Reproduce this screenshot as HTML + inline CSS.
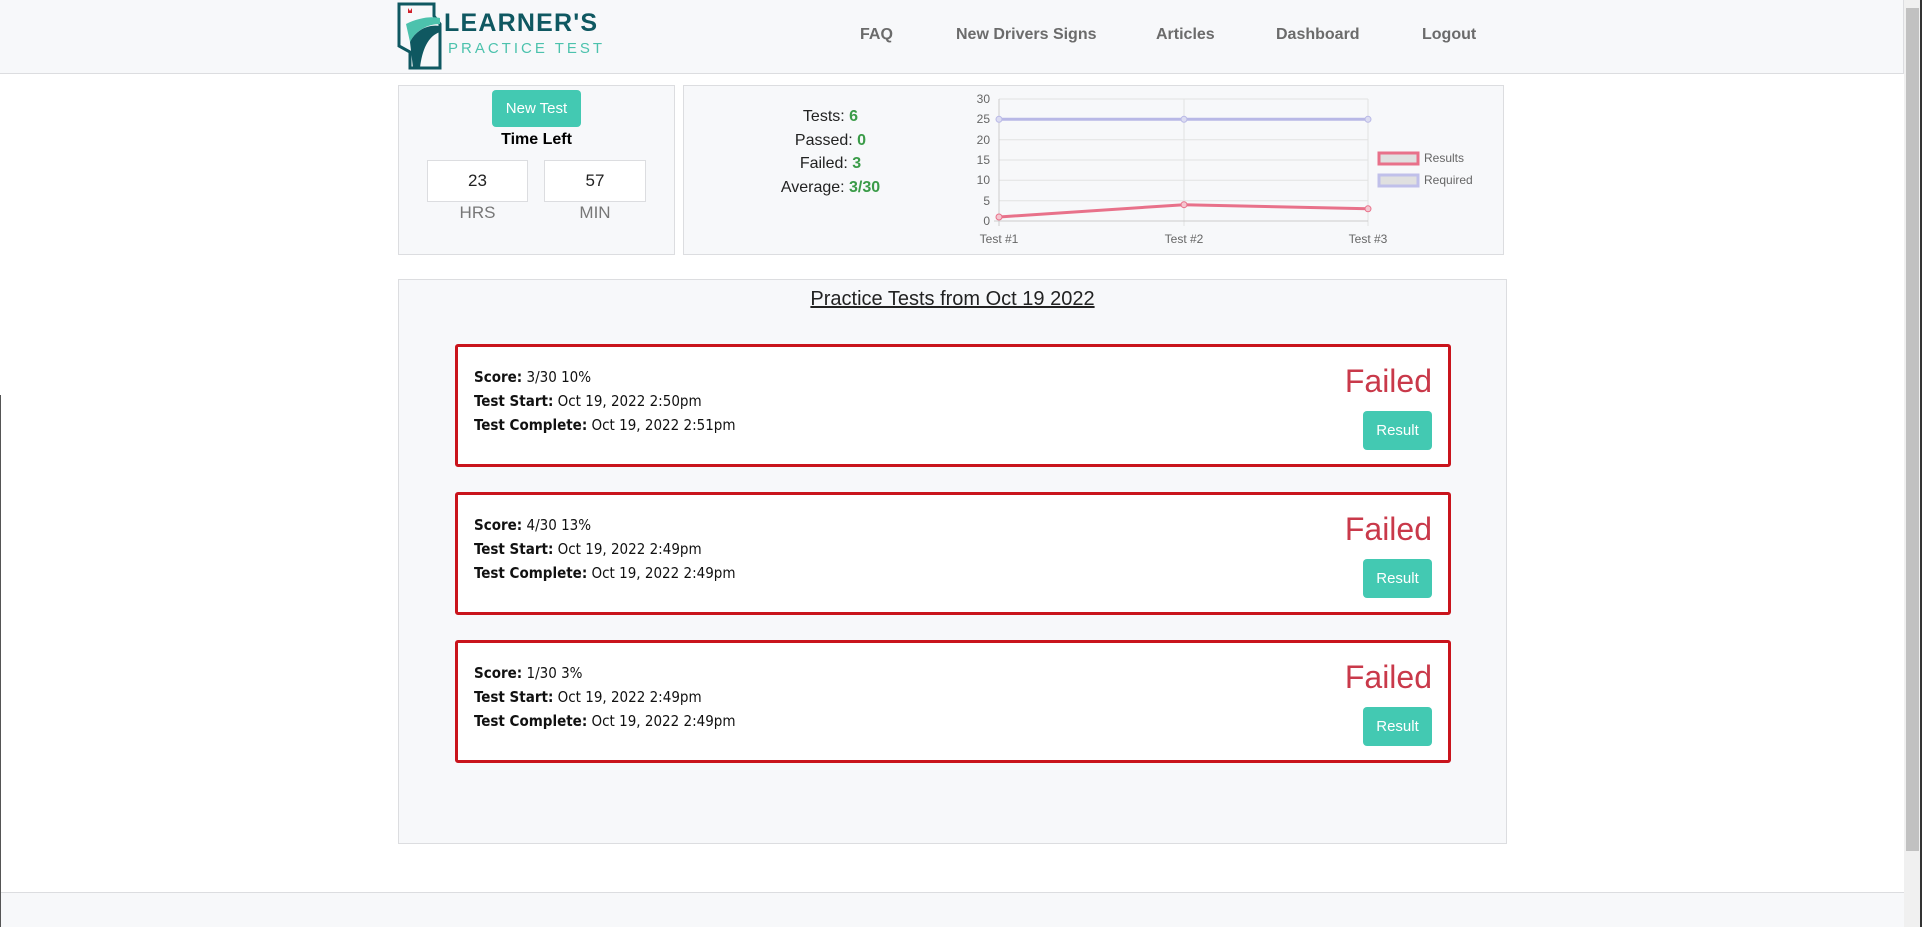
<!DOCTYPE html>
<html><head><meta charset="utf-8"><style>
*{margin:0;padding:0;box-sizing:border-box}
body{width:1922px;height:927px;overflow:hidden;background:#fff;font-family:"Liberation Sans",sans-serif;position:relative}
.a{position:absolute}
.hdr{left:0;top:0;width:1904px;height:74px;background:#f7f8fa;border-bottom:1px solid #dcdde0;border-right:1px solid #dcdde0}
.nav{top:26px;font-size:16px;font-weight:bold;color:#6b6b6b}
.panel{background:#f7f8fa;border:1px solid #dcdde0}
.btn{background:#43c9b2;color:#fff;border-radius:4px;text-align:center}
.box{background:#fff;border:1px solid #dcdde0;text-align:center;font-size:17px;line-height:40px;color:#222}
.st{left:683px;width:295px;text-align:center;font-size:16px;color:#222}
.st b{color:#3a9b48}
.card{left:455px;width:996px;height:123px;background:#fff;border:3px solid #c9141c;border-radius:3px}
.card .t{position:absolute;left:16px;font-size:15px;color:#111;font-family:"DejaVu Sans Condensed","Liberation Sans",sans-serif}
.card .f{position:absolute;right:16px;top:16px;font-size:32px;color:#c9394a}
.card .r{position:absolute;right:16px;top:64px;width:69px;height:39px;line-height:39px;font-size:15px}
</style></head><body>
<div class="a hdr"></div>
<svg class="a" style="left:396px;top:2px" width="48" height="68" viewBox="0 0 48 68">
<path d="M3 2 H38 V14 L44 22 V66 H14 L14 50 L3 44 Z" fill="none" stroke="#0f5861" stroke-width="3"/>
<path d="M10 22 C22 16 34 14 44 16 L44 22 C32 22 20 28 14 40 Z" fill="#4cc2ad"/>
<path d="M14 40 C20 28 32 22 44 24 L44 30 C32 34 26 48 24 66 H17 Z" fill="#0f5861"/>
<path d="M12 6 l2 3 2-3 v5 h-4z" fill="#d0202a"/>
</svg>
<div class="a" style="left:444px;top:9px;font-size:25px;font-weight:bold;color:#0f5861;letter-spacing:1.2px">LEARNER'S</div>
<div class="a" style="left:448px;top:40px;font-size:15px;color:#4cc2ad;letter-spacing:3px">PRACTICE TEST</div>
<div class="a nav" style="left:860px">FAQ</div>
<div class="a nav" style="left:956px">New Drivers Signs</div>
<div class="a nav" style="left:1156px">Articles</div>
<div class="a nav" style="left:1276px">Dashboard</div>
<div class="a nav" style="left:1422px">Logout</div>

<div class="a panel" style="left:398px;top:85px;width:277px;height:170px"></div>
<div class="a btn" style="left:492px;top:90px;width:89px;height:37px;line-height:37px;font-size:15px">New Test</div>
<div class="a" style="left:398px;top:131px;width:277px;text-align:center;font-size:16px;font-weight:bold">Time Left</div>
<div class="a box" style="left:427px;top:160px;width:101px;height:42px">23</div>
<div class="a box" style="left:544px;top:160px;width:102px;height:42px">57</div>
<div class="a" style="left:427px;top:203px;width:101px;text-align:center;font-size:17px;color:#777">HRS</div>
<div class="a" style="left:544px;top:203px;width:102px;text-align:center;font-size:17px;color:#777">MIN</div>

<div class="a panel" style="left:683px;top:85px;width:821px;height:170px"></div>
<div class="a st" style="top:108px">Tests: <b>6</b></div>
<div class="a st" style="top:132px">Passed: <b>0</b></div>
<div class="a st" style="top:155px">Failed: <b>3</b></div>
<div class="a st" style="top:179px">Average: <b>3/30</b></div>
<svg class="a" style="left:0;top:0" width="1922" height="260" font-family="Liberation Sans" font-size="12" fill="#666">
<g stroke="#e2e2e2" stroke-width="1">
<line x1="999" y1="99" x2="1368" y2="99"/><line x1="999" y1="119.3" x2="1368" y2="119.3"/><line x1="999" y1="139.7" x2="1368" y2="139.7"/><line x1="999" y1="160" x2="1368" y2="160"/><line x1="999" y1="180.3" x2="1368" y2="180.3"/><line x1="999" y1="200.7" x2="1368" y2="200.7"/>
<line x1="1184" y1="99" x2="1184" y2="226"/><line x1="1368" y1="99" x2="1368" y2="226"/>
</g>
<line x1="994" y1="221" x2="1368" y2="221" stroke="#ccc"/><line x1="999" y1="99" x2="999" y2="226" stroke="#ccc"/>
<g text-anchor="end"><text x="990" y="103">30</text><text x="990" y="123">25</text><text x="990" y="144">20</text><text x="990" y="164">15</text><text x="990" y="184">10</text><text x="990" y="205">5</text><text x="990" y="225">0</text></g>
<g text-anchor="middle"><text x="999" y="243">Test #1</text><text x="1184" y="243">Test #2</text><text x="1368" y="243">Test #3</text></g>
<polyline points="999,119.3 1184,119.3 1368,119.3" fill="none" stroke="#b8b8e6" stroke-width="3"/>
<g fill="#dcdcf2" stroke="#b8b8e6"><circle cx="999" cy="119.3" r="3"/><circle cx="1184" cy="119.3" r="3"/><circle cx="1368" cy="119.3" r="3"/></g>
<polyline points="999,217 1184,204.7 1368,208.8" fill="none" stroke="#e8718a" stroke-width="3"/>
<g fill="#f5c6d0" stroke="#e8718a"><circle cx="999" cy="217" r="3"/><circle cx="1184" cy="204.7" r="3"/><circle cx="1368" cy="208.8" r="3"/></g>
<rect x="1379" y="153" width="39" height="11" fill="#e0e0e0" stroke="#e8718a" stroke-width="3"/>
<rect x="1379" y="175" width="39" height="11" fill="#e0e0e0" stroke="#c0c0ea" stroke-width="3"/>
<text x="1424" y="162">Results</text><text x="1424" y="184">Required</text>
</svg>

<div class="a panel" style="left:398px;top:279px;width:1109px;height:565px"></div>
<div class="a" style="left:398px;top:288px;width:1109px;text-align:center;font-size:20px;color:#222;text-decoration:underline">Practice Tests from Oct 19 2022</div>

<div class="a card" style="top:344px">
<div class="t" style="top:21px"><b>Score:</b> 3/30 10%</div>
<div class="t" style="top:45px"><b>Test Start:</b> Oct 19, 2022 2:50pm</div>
<div class="t" style="top:69px"><b>Test Complete:</b> Oct 19, 2022 2:51pm</div>
<div class="f">Failed</div><div class="r btn">Result</div></div>
<div class="a card" style="top:492px">
<div class="t" style="top:21px"><b>Score:</b> 4/30 13%</div>
<div class="t" style="top:45px"><b>Test Start:</b> Oct 19, 2022 2:49pm</div>
<div class="t" style="top:69px"><b>Test Complete:</b> Oct 19, 2022 2:49pm</div>
<div class="f">Failed</div><div class="r btn">Result</div></div>
<div class="a card" style="top:640px">
<div class="t" style="top:21px"><b>Score:</b> 1/30 3%</div>
<div class="t" style="top:45px"><b>Test Start:</b> Oct 19, 2022 2:49pm</div>
<div class="t" style="top:69px"><b>Test Complete:</b> Oct 19, 2022 2:49pm</div>
<div class="f">Failed</div><div class="r btn">Result</div></div>

<div class="a" style="left:0;top:892px;width:1904px;height:35px;background:#f7f8fa;border-top:1px solid #dcdde0"></div>
<div class="a" style="left:0;top:395px;width:1px;height:532px;background:#555"></div>
<div class="a" style="left:1904px;top:0;width:16px;height:927px;background:#f0f0f0"></div>
<div class="a" style="left:1906px;top:8px;width:13px;height:843px;background:#c1c1c1"></div>
<div class="a" style="left:1920px;top:0;width:2px;height:927px;background:#333"></div>
</body></html>
